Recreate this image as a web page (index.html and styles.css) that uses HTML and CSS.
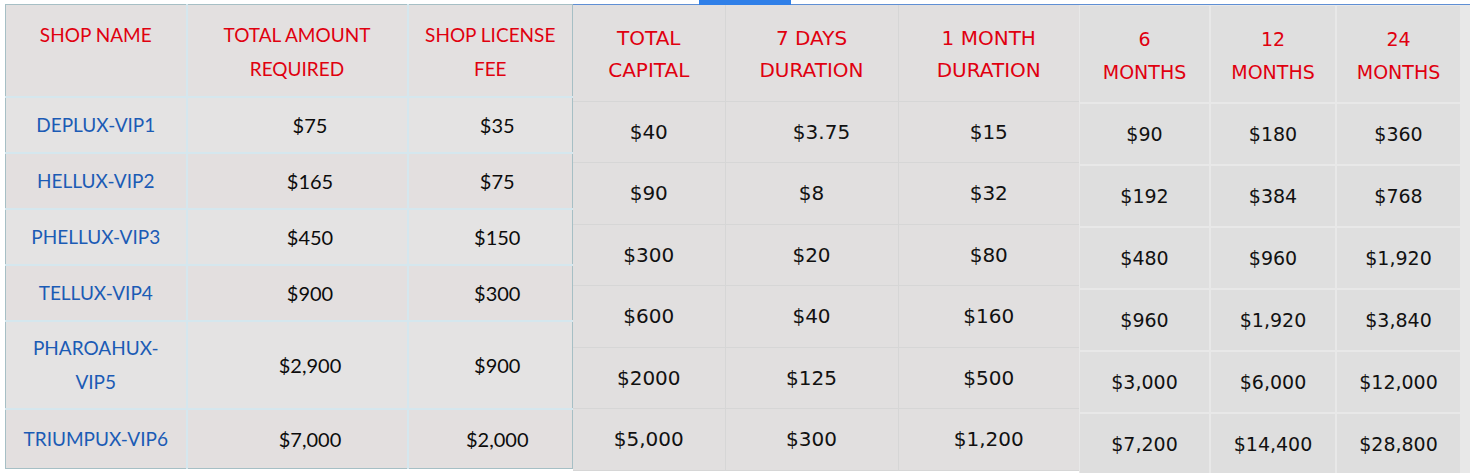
FILE: index.html
```html
<!DOCTYPE html>
<html>
<head>
<meta charset="utf-8">
<link rel="stylesheet" href="styles.css">
</head>
<body>
<div class="page">
  <div class="tab"></div>
  <div class="tables">
    <table class="shops">
      <colgroup><col class="c1"><col class="c2"><col class="c3"></colgroup>
      <thead>
        <tr class="head"><th>SHOP NAME<br>&nbsp;</th><th>TOTAL AMOUNT<br>REQUIRED</th><th>SHOP LICENSE<br>FEE</th></tr>
      </thead>
      <tbody>
        <tr class="r"><td class="name">DEPLUX-VIP1</td><td class="amt">$75</td><td class="fee">$35</td></tr>
        <tr class="r alt"><td class="name">HELLUX-VIP2</td><td class="amt">$165</td><td class="fee">$75</td></tr>
        <tr class="r"><td class="name">PHELLUX-VIP3</td><td class="amt">$450</td><td class="fee">$150</td></tr>
        <tr class="r alt"><td class="name">TELLUX-VIP4</td><td class="amt">$900</td><td class="fee">$300</td></tr>
        <tr class="r tall"><td class="name">PHAROAHUX-<br>VIP5</td><td class="amt">$2,900</td><td class="fee">$900</td></tr>
        <tr class="r alt last"><td class="name">TRIUMPUX-VIP6</td><td class="amt">$7,000</td><td class="fee">$2,000</td></tr>
      </tbody>
    </table>
    <table class="capital">
      <colgroup><col class="m1"><col class="m2"><col class="m3"></colgroup>
      <thead>
        <tr class="head"><th>TOTAL<br>CAPITAL</th><th>7 DAYS<br>DURATION</th><th>1 MONTH<br>DURATION</th></tr>
      </thead>
      <tbody>
        <tr><td>$40</td><td class="off">$3.75</td><td>$15</td></tr>
        <tr><td>$90</td><td>$8</td><td>$32</td></tr>
        <tr><td>$300</td><td>$20</td><td>$80</td></tr>
        <tr><td>$600</td><td>$40</td><td>$160</td></tr>
        <tr><td>$2000</td><td>$125</td><td>$500</td></tr>
        <tr><td>$5,000</td><td>$300</td><td>$1,200</td></tr>
      </tbody>
    </table>
    <div class="rightwrap">
      <table class="months">
        <colgroup><col class="k1"><col class="k2"><col class="k3"></colgroup>
        <thead>
          <tr class="head"><th>6<br>MONTHS</th><th>12<br>MONTHS</th><th>24<br>MONTHS</th></tr>
        </thead>
        <tbody>
          <tr><td>$90</td><td>$180</td><td>$360</td></tr>
          <tr class="alt"><td>$192</td><td>$384</td><td>$768</td></tr>
          <tr><td>$480</td><td>$960</td><td>$1,920</td></tr>
          <tr class="alt"><td>$960</td><td>$1,920</td><td>$3,840</td></tr>
          <tr><td>$3,000</td><td>$6,000</td><td>$12,000</td></tr>
          <tr class="alt"><td>$7,200</td><td>$14,400</td><td>$28,800</td></tr>
        </tbody>
      </table>
    </div>
  </div>
</div>
</body>
</html>
```

FILE: styles.css
```css
html, body {
  margin: 0;
  padding: 0;
  background: #ffffff;
  overflow: hidden;
}

.page {
  position: relative;
  width: 1474px;
  height: 473px;
  padding-top: 4px;
  box-sizing: border-box;
}

.tab {
  position: absolute;
  left: 699px;
  top: 0;
  width: 92px;
  height: 5px;
  background: #2f7fe8;
}

.tables {
  display: flex;
  align-items: flex-start;
  margin-left: 5px;
  width: 1465px;
  border-top: 1px solid #5f8fd4;
}

table {
  border-collapse: collapse;
  table-layout: fixed;
}

th, td {
  text-align: center;
  vertical-align: middle;
  padding: 0;
  font-weight: normal;
}

/* Left table */
.shops {
  width: 567px;
  font-family: "Lato", "Open Sans", sans-serif;
  font-size: 19px;
  line-height: 34px;
  color: #111111;
  border: 1px solid #a6bfc5;
  margin-top: -1px;
}
.shops .c1 { width: 181px; }
.shops .c2 { width: 221px; }
.shops .c3 { width: 165px; }

.shops th, .shops td {
  border: 2px solid #d5e7ee;
  background: #e4e3e3;
}
.shops tr:first-child th { border-top: none; }
.shops th:first-child, .shops td:first-child { border-left: none; }
.shops th:last-child, .shops td:last-child { border-right: none; }
.shops tr.last td { border-bottom: none; }

.shops .head th {
  height: 92px;
  color: #e0000f;
  background: #e3e0e0;
  vertical-align: top;
  padding-top: 13px;
  box-sizing: border-box;
}
.shops .r td { height: 54px; }
.shops .r.tall td { height: 86px; }
.shops .r.last td { height: 58px; }
.shops .r.alt td { background: #e3dfdf; }
.shops .name { color: #1b5bb5; }
.shops td.amt, .shops td.fee {
  font-size: 20px;
  color: #0c0c0c;
}
.shops td.amt { padding-left: 26px; }
.shops td.fee { padding-left: 14px; }

/* Middle table */
.capital {
  width: 506px;
  font-family: "DejaVu Sans", Verdana, sans-serif;
  font-size: 20px;
  line-height: 32px;
  color: #111111;
}
.capital .m1 { width: 152px; }
.capital .m2 { width: 173px; }
.capital .m3 { width: 181px; }
.capital th, .capital td {
  background: #e1dfdf;
  border: 1px solid #d6d6d6;
}
.capital tr:first-child th { border-top: none; }
.capital th:first-child, .capital td:first-child { border-left: none; }
.capital th:last-child, .capital td:last-child { border-right: none; }
.capital .head th {
  height: 96px;
  color: #e0000f;
  padding-top: 2px;
  box-sizing: border-box;
}
.capital td { height: 60.5px; }
.capital td.off { text-indent: 20px; }

/* Right table */
.rightwrap {
  background: #e8e8e8;
  width: 392px;
  height: 468px;
  overflow: hidden;
}
.months {
  border-collapse: separate;
  border-spacing: 2px;
  width: 382px;
  margin-left: -1px;
  margin-top: -1px;
  font-family: "DejaVu Sans", Verdana, sans-serif;
  font-size: 19px;
  line-height: 33px;
  color: #111111;
}
.months .k1 { width: 129px; }
.months .k2 { width: 124px; }
.months .k3 { width: 123px; }
.months th, .months td { background: #dfdfdf; }
.months .head th {
  height: 96px;
  color: #e0000f;
  padding-top: 4px;
  box-sizing: border-box;
}
.months td { height: 60px; }
.months tr.alt td { background: #dedede; }
```
